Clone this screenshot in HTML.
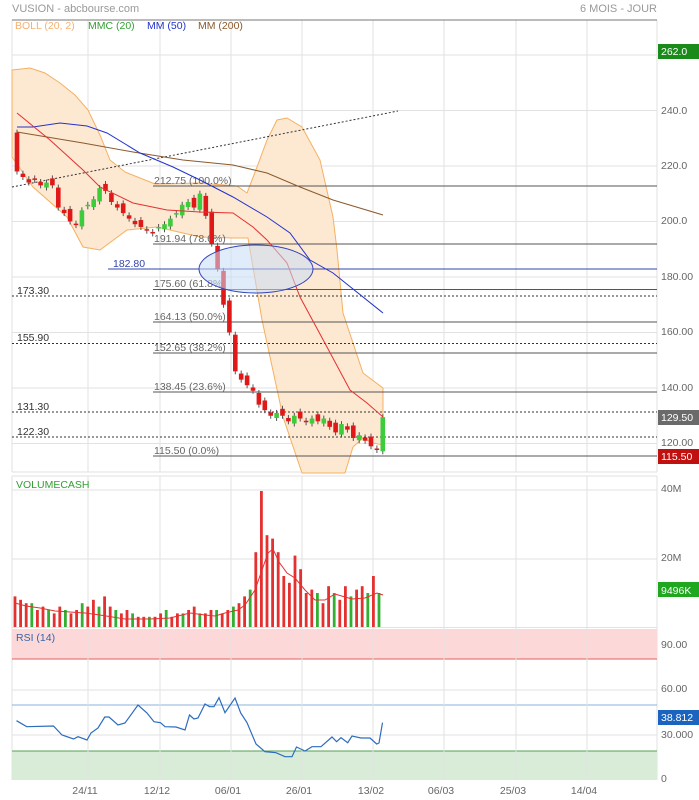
<!DOCTYPE html>
<html><head><meta charset="utf-8"><style>
html,body{margin:0;padding:0;background:#fff;width:699px;height:800px;overflow:hidden}
svg{display:block;font-family:"Liberation Sans",sans-serif}
</style></head><body>
<svg id="s" width="699" height="800" viewBox="0 0 699 800" xmlns="http://www.w3.org/2000/svg">
<rect width="699" height="800" fill="#fff"/>
<text x="12" y="12" font-size="11" fill="#999">VUSION - abcbourse.com</text>
<text x="657" y="12" font-size="11" fill="#999" text-anchor="end">6 MOIS - JOUR</text>
<g stroke="#e2e2e2" stroke-width="1">
<line x1="12" y1="55" x2="657" y2="55"/><line x1="12" y1="110.5" x2="657" y2="110.5"/><line x1="12" y1="166" x2="657" y2="166"/><line x1="12" y1="221.5" x2="657" y2="221.5"/><line x1="12" y1="277" x2="657" y2="277"/><line x1="12" y1="332.5" x2="657" y2="332.5"/><line x1="12" y1="388" x2="657" y2="388"/><line x1="12" y1="443.5" x2="657" y2="443.5"/>
<line x1="12" y1="20" x2="12" y2="472"/><line x1="88" y1="20" x2="88" y2="472"/><line x1="160" y1="20" x2="160" y2="472"/><line x1="231" y1="20" x2="231" y2="472"/><line x1="302" y1="20" x2="302" y2="472"/><line x1="373" y1="20" x2="373" y2="472"/><line x1="444" y1="20" x2="444" y2="472"/><line x1="516" y1="20" x2="516" y2="472"/><line x1="587" y1="20" x2="587" y2="472"/><line x1="657" y1="20" x2="657" y2="472"/>
<line x1="12" y1="472" x2="657" y2="472"/>
</g>
<line x1="12" y1="20" x2="657" y2="20" stroke="#777"/>
<path d="M12,70 L30,68 L45,73 L60,83 L75,95 L88,110 L100,135 L110,160 L125,172 L155,184 L200,183 L237,186 L247,193 L257,167 L267,140 L277,120 L287,118 L302,127 L320,160 L333,217 L337,250 L343,313 L363,373 L383,388 L383,445 L373,443 L363,438 L353,447 L345,473 L302,473 L283,417 L262,320 L248,238 L233,238 L200,237 L157,227 L127,230 L100,250 L83,247 L67,217 L33,187 L12,157 Z" fill="#fde8d2" stroke="#f5b060" stroke-width="1"/>
<line x1="12" y1="187" x2="398" y2="111" stroke="#333" stroke-dasharray="2,2"/>
<g stroke="#555" stroke-width="1">
<line x1="153" y1="186" x2="657" y2="186"/><line x1="153" y1="244" x2="657" y2="244"/><line x1="153" y1="289.5" x2="657" y2="289.5"/><line x1="153" y1="322" x2="657" y2="322"/><line x1="153" y1="353" x2="657" y2="353"/><line x1="153" y1="392" x2="657" y2="392"/><line x1="153" y1="456" x2="657" y2="456"/>
</g>
<g stroke="#333" stroke-dasharray="2,2">
<line x1="12" y1="296" x2="657" y2="296"/><line x1="12" y1="343.5" x2="657" y2="343.5"/><line x1="12" y1="412" x2="657" y2="412"/><line x1="12" y1="437" x2="657" y2="437"/>
</g>
<line x1="108" y1="269" x2="657" y2="269" stroke="#3344aa"/>
<g font-size="10.5" fill="#666">
<text x="154" y="184">212.75  (100.0%)</text><text x="154" y="242">191.94  (78.6%)</text><text x="154" y="287">175.60  (61.8%)</text><text x="154" y="320">164.13  (50.0%)</text><text x="154" y="351">152.65  (38.2%)</text><text x="154" y="390">138.45  (23.6%)</text><text x="154" y="454">115.50  (0.0%)</text>
</g>
<g font-size="10.5" fill="#333">
<text x="17" y="294">173.30</text><text x="17" y="341">155.90</text><text x="17" y="410">131.30</text><text x="17" y="435">122.30</text>
</g>
<text x="113" y="267" font-size="10.5" fill="#3344aa">182.80</text>
<polyline fill="none" stroke="#8b5a2b" stroke-width="1" points="17,132 83,143 133,152 183,160 233,165 267,173 300,187 333,200 383,215"/>
<polyline fill="none" stroke="#2233cc" stroke-width="1" points="17,127 33,127 60,123 87,126 107,133 140,153 173,167 200,180 233,197 267,217 290,233 310,260 333,273 383,313"/>
<g id="candles"></g>
<polyline fill="none" stroke="#e53030" stroke-width="1" points="17,113 50,140 83,170 100,187 133,203 167,210 200,212 233,213 253,227 267,240 287,263 300,297 327,347 350,390 367,403 383,417"/>
<ellipse cx="256" cy="269" rx="57" ry="24" fill="#c8dcf5" fill-opacity="0.55" stroke="#3344bb" stroke-width="1"/>
<g font-size="10.5"><text x="15" y="29" fill="#f5b070">BOLL (20, 2)</text><text x="88" y="29" fill="#33a033">MMC (20)</text><text x="147" y="29" fill="#2233cc">MM (50)</text><text x="198" y="29" fill="#8b5a2b">MM (200)</text></g>
<g font-size="10.5" fill="#666"><text x="661" y="114">240.0</text><text x="661" y="169">220.0</text><text x="661" y="224">200.0</text><text x="661" y="280">180.00</text><text x="661" y="335">160.00</text><text x="661" y="391">140.00</text><text x="661" y="446">120.00</text></g>
<rect x="658" y="44" width="41" height="15" fill="#1a8a1a"/><text x="661" y="55" font-size="10.5" fill="#fff">262.0</text>
<rect x="658" y="410" width="41" height="15" fill="#6a6a6a"/><text x="661" y="421" font-size="10.5" fill="#fff">129.50</text>
<rect x="658" y="449" width="41" height="15" fill="#c01010"/><text x="661" y="460" font-size="10.5" fill="#fff">115.50</text>
<g stroke="#e2e2e2"><line x1="12" y1="476" x2="657" y2="476"/><line x1="12" y1="490" x2="657" y2="490"/><line x1="12" y1="559" x2="657" y2="559"/><line x1="12" y1="627.5" x2="657" y2="627.5"/>
<line x1="88" y1="476" x2="88" y2="780"/><line x1="160" y1="476" x2="160" y2="780"/><line x1="231" y1="476" x2="231" y2="780"/><line x1="302" y1="476" x2="302" y2="780"/><line x1="373" y1="476" x2="373" y2="780"/><line x1="444" y1="476" x2="444" y2="780"/><line x1="516" y1="476" x2="516" y2="780"/><line x1="587" y1="476" x2="587" y2="780"/><line x1="657" y1="476" x2="657" y2="780"/><line x1="12" y1="476" x2="12" y2="780"/></g>
<text x="16" y="488" font-size="10.5" fill="#33a033">VOLUMECASH</text>
<g id="vol"></g>
<polyline fill="none" stroke="#e53030" points="15,603 26,606 40,608 55,611 70,612 85,613 100,615 125,619 150,619 170,618 190,613 205,615 215,616 225,613 238,610 245,605 255,590 262,570 268,553 273,549 279,562 287,573 295,578 305,590 315,600 325,600 335,594 345,597 352,599 365,598 377,593 383,595"/>
<text x="661" y="492" font-size="10.5" fill="#666">40M</text><text x="661" y="561" font-size="10.5" fill="#666">20M</text>
<rect x="658" y="582" width="41" height="15" fill="#1fa81f"/><text x="661" y="594" font-size="10.5" fill="#fff">9496K</text>
<rect x="12" y="629" width="645" height="30" fill="#fdd8d8"/>
<line x1="12" y1="659" x2="657" y2="659" stroke="#e06060"/>
<line x1="12" y1="690" x2="657" y2="690" stroke="#e2e2e2"/>
<line x1="12" y1="735" x2="657" y2="735" stroke="#e2e2e2"/>
<line x1="12" y1="705" x2="657" y2="705" stroke="#88b0dd"/>
<rect x="12" y="751" width="645" height="29" fill="#d8ecd8"/>
<line x1="12" y1="751" x2="657" y2="751" stroke="#55a055"/>
<g stroke="#e2e2e2"><line x1="88" y1="629" x2="88" y2="780"/><line x1="160" y1="629" x2="160" y2="780"/><line x1="231" y1="629" x2="231" y2="780"/><line x1="302" y1="629" x2="302" y2="780"/><line x1="373" y1="629" x2="373" y2="780"/><line x1="444" y1="629" x2="444" y2="780"/><line x1="516" y1="629" x2="516" y2="780"/><line x1="587" y1="629" x2="587" y2="780"/></g>
<text x="16" y="641" font-size="10.5" fill="#3366aa">RSI (14)</text>
<polyline fill="none" stroke="#2b6cc0" stroke-width="1.2" points="16.5,720.7 26.7,726.7 53.5,726 62,735 73.6,739 78,736.7 87,740 91,733 98,728 104.8,717 109,717 118,725 125,723 138,705 147,713 154,721.7 160.5,722.7 165,726.7 176,727 185,730 189.5,715 194,719 198,718 205,704 209.5,706.7 214,706.7 219,697.7 225,712.7 235,698 240.7,713 247,722.7 256,744 265,751.7 276,752.7 285,756.7 292,756.7 296.5,747 305,751 312,746.7 321,746.7 332,737 336.6,741.7 341,737.7 347.7,742.7 352,736 361,738 370,738 376.7,744 379,743 382.5,722.7"/>
<g font-size="10.5" fill="#666"><text x="661" y="648">90.00</text><text x="661" y="692">60.00</text><text x="661" y="738">30.000</text><text x="661" y="782">0</text></g>
<rect x="658" y="710" width="41" height="15" fill="#1a64c0"/><text x="661" y="721" font-size="10.5" fill="#fff">38.812</text>
<g font-size="10.5" fill="#666" text-anchor="middle"><text x="85" y="794">24/11</text><text x="157" y="794">12/12</text><text x="228" y="794">06/01</text><text x="299" y="794">26/01</text><text x="371" y="794">13/02</text><text x="441" y="794">06/03</text><text x="513" y="794">25/03</text><text x="584" y="794">14/04</text></g>
</svg>
<script>
var c=[218,216,214,215,213,214,213,205,203,200,199,204,206,208,212,211,207,205,203,201,199,198,197,196,198,199,201,203,206,207,205,210,202,192,183,170,160,146,143,141,139,134,132,130,131,130,128,130,129,128,129,128,129,126,124,127,125,122,123,121,119,118,129.5];
var v=[9,8,7,7,5,6,5,4,6,5,4,5,7,6,8,6,9,6,5,4,5,4,3,3,3,3,4,5,3,4,4,5,6,4,4,5,5,4,5,6,7,9,11,22,40,27,26,22,15,13,21,17,10,11,10,7,12,10,8,12,9,11,12,10,15,10];
var y=function(p){return 456-(p-115.5)*2.776};
var g=document.getElementById("candles"),h="";
for(var i=0;i<c.length;i++){var x=17+i*5.9,o=i==0?232:c[i-1]+(i%3==0?1.5:-0.8),cl=c[i];var up=cl>o;var col=up?"#3ccc3c":"#e01818";
var t=Math.min(y(o),y(cl)),b=Math.max(y(o),y(cl));if(b-t<1.5)b=t+1.5;
h+='<line x1="'+x+'" y1="'+(t-3)+'" x2="'+x+'" y2="'+(b+3)+'" stroke="#555" stroke-width="1"/>';
h+='<rect x="'+(x-2.3)+'" y="'+t+'" width="4.6" height="'+(b-t)+'" fill="'+col+'"/>';}
g.innerHTML=h;
var vg=document.getElementById("vol"),vh="";var n=v.length;
for(var i=0;i<n;i++){var x=15+i*5.6;var val=v[i];var up=i>0&&((i*7)%3==0);var col=(i>=45&&i<53)?"#e53030":(up?"#33b033":"#e53030");if(i==n-1)col="#33b033";
vh+='<rect x="'+(x-1.4)+'" y="'+(627-val*3.4)+'" width="2.8" height="'+(val*3.4)+'" fill="'+col+'"/>';}
vg.innerHTML=vh;
</script>
</body></html>
